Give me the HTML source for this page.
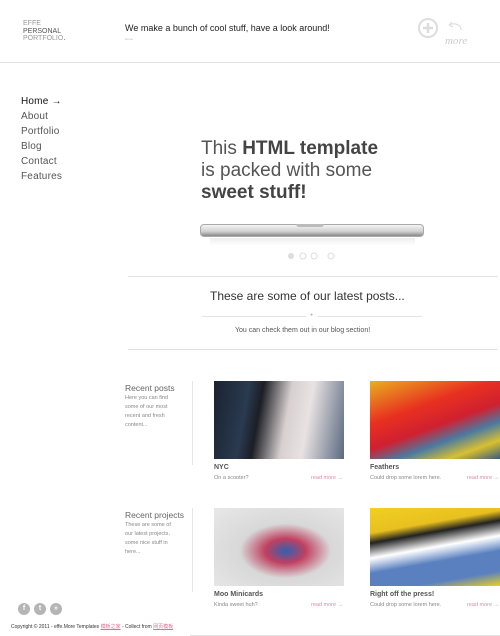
<!DOCTYPE html>
<html><head><meta charset="utf-8"><style>
*{margin:0;padding:0;box-sizing:border-box}
body{width:500px;height:636px;overflow:hidden;background:#fff;font-family:"Liberation Sans","Noto Sans CJK SC",sans-serif;position:relative;color:#333}
.a{position:absolute;white-space:nowrap}
.nav{left:21px;font-size:10px;color:#555;letter-spacing:.2px}
.hr{position:absolute;height:1px;background:#e2e2e2}
.img{position:absolute;width:130px;height:78px}
.cap{font-size:7px;font-weight:bold;color:#555}
.sub{font-size:5.5px;color:#888}
.rm{font-size:5.5px;color:#e08aa5}
.side{font-size:5.5px;color:#888;line-height:9px;white-space:normal;width:50px}
.h{font-size:8.5px;color:#666}
.soc{position:absolute;top:603px;width:12px;height:12px;border-radius:50%;background:#b5b5b5;color:#fff;font-size:7px;text-align:center;line-height:12px;font-weight:bold}
</style></head><body>
<div class="a" style="left:23px;top:20px;font-size:7px;line-height:7.5px;color:#999">EFFE<br><span style="color:#555">PERSONAL</span><br>PORTFOLIO<span style="color:#333">.</span></div>
<div class="a" style="left:125px;top:23px;font-size:9px;color:#222">We make a bunch of cool stuff, have a look around!</div>
<div class="a" style="left:125px;top:37px;font-size:3px;color:#bbb">Home</div>
<svg class="a" style="left:415px;top:14px" width="62" height="34"><circle cx="13" cy="14" r="9" fill="none" stroke="#ddd" stroke-width="2"/><path d="M13 9v10M8 14h10" stroke="#ddd" stroke-width="2.5"/><path d="M34 11c6-3 12 0 12 5M34 11l3-3M34 11l4 2" fill="none" stroke="#ddd" stroke-width="1.2"/><text x="30" y="30" font-size="11" font-style="italic" fill="#ccc" font-family="Liberation Serif,serif">more</text></svg>
<div class="hr" style="left:0;top:62px;width:500px"></div>
<div class="a nav" style="top:96px;color:#111">Home →</div>
<div class="a nav" style="top:111px">About</div>
<div class="a nav" style="top:126px">Portfolio</div>
<div class="a nav" style="top:141px">Blog</div>
<div class="a nav" style="top:156px">Contact</div>
<div class="a nav" style="top:171px">Features</div>
<div class="a" style="left:201px;top:138px;font-size:19px;line-height:22px;color:#555">This <b style="color:#444">HTML template</b><br>is packed with some<br><b style="color:#444">sweet stuff!</b></div>
<div class="a" style="left:200px;top:224px;width:224px;height:13px;border-radius:4px;background:linear-gradient(#f4f4f4,#cfcfcf 60%,#888);border:1px solid #aaa"></div>
<div class="a" style="left:296px;top:224px;width:28px;height:3px;background:#bbb;border-radius:0 0 3px 3px"></div>
<div class="a" style="left:210px;top:238px;width:205px;height:8px;background:linear-gradient(#eee,#fff)"></div>
<svg class="a" style="left:286px;top:251px" width="50" height="10"><circle cx="5" cy="5" r="3" fill="#ddd"/><circle cx="17" cy="5" r="3" fill="none" stroke="#ddd"/><circle cx="28" cy="5" r="3" fill="none" stroke="#ddd"/><circle cx="45" cy="5" r="3" fill="none" stroke="#ddd"/></svg>
<div class="hr" style="left:128px;top:276px;width:370px"></div>
<div class="a" style="left:210px;top:289px;font-size:12px;color:#333">These are some of our latest posts...</div>
<div class="hr" style="left:202px;top:316px;width:104px"></div>
<div class="hr" style="left:318px;top:316px;width:104px"></div>
<div class="a" style="left:310px;top:312px;font-size:5px;color:#bbb">●</div>
<div class="a" style="left:235px;top:327px;font-size:7px;color:#555">You can check them out in our blog section!</div>
<div class="hr" style="left:128px;top:349px;width:370px"></div>

<div class="a h" style="left:125px;top:383px">Recent posts</div>
<div class="a side" style="left:125px;top:394px">Here you can find some of our most recent and fresh content...</div>
<div class="a" style="left:192px;top:381px;width:1px;height:84px;background:#e5e5e5"></div>
<div class="img" style="left:214px;top:381px;background:linear-gradient(100deg,#1a2230 0%,#2a3a50 25%,#1c1e24 35%,#d8d0d0 55%,#e8e2e2 70%,#5a6a80 100%)"></div>
<div class="img" style="left:370px;top:381px;background:linear-gradient(160deg,#e8b020 0%,#e83020 35%,#d02030 55%,#4a7aa0 70%,#d8c030 85%,#3a5a80 100%)"></div>
<div class="a cap" style="left:214px;top:464px">NYC</div>
<div class="a sub" style="left:214px;top:475px">On a scooter?</div>
<div class="a rm" style="left:311px;top:475px">read more →</div>
<div class="a cap" style="left:370px;top:464px">Feathers</div>
<div class="a sub" style="left:370px;top:475px">Could drop some lorem here.</div>
<div class="a rm" style="left:467px;top:475px">read more →</div>

<div class="a h" style="left:125px;top:510px">Recent projects</div>
<div class="a side" style="left:125px;top:521px">These are some of our latest projects, some nice stuff in here...</div>
<div class="a" style="left:192px;top:508px;width:1px;height:84px;background:#e5e5e5"></div>
<div class="img" style="left:214px;top:508px;background:radial-gradient(ellipse at 55% 55%,#3060b0 0%,#c04060 20%,#d8d8d8 45%,#e8e8e8 100%)"></div>
<div class="img" style="left:370px;top:508px;background:linear-gradient(170deg,#f0d020 0%,#e8c020 25%,#222 35%,#ffffff 50%,#5a80c0 65%,#5a80c0 85%,#e8d020 100%)"></div>
<div class="a cap" style="left:214px;top:591px">Moo Minicards</div>
<div class="a sub" style="left:214px;top:602px">Kinda sweet huh?</div>
<div class="a rm" style="left:311px;top:602px">read more →</div>
<div class="a cap" style="left:370px;top:591px">Right off the press!</div>
<div class="a sub" style="left:370px;top:602px">Could drop some lorem here.</div>
<div class="a rm" style="left:467px;top:602px">read more →</div>

<div class="soc" style="left:18px">f</div>
<div class="soc" style="left:34px">t</div>
<div class="soc" style="left:50px">»</div>
<div class="a" style="left:11px;top:623px;font-size:5px;color:#333">Copyright © 2011 - effe.More Templates <span style="color:#e07090;text-decoration:underline">模板之家</span> - Collect from <span style="color:#e07090;text-decoration:underline">网页模板</span></div>
<div class="hr" style="left:190px;top:635px;width:310px"></div>
</body></html>
